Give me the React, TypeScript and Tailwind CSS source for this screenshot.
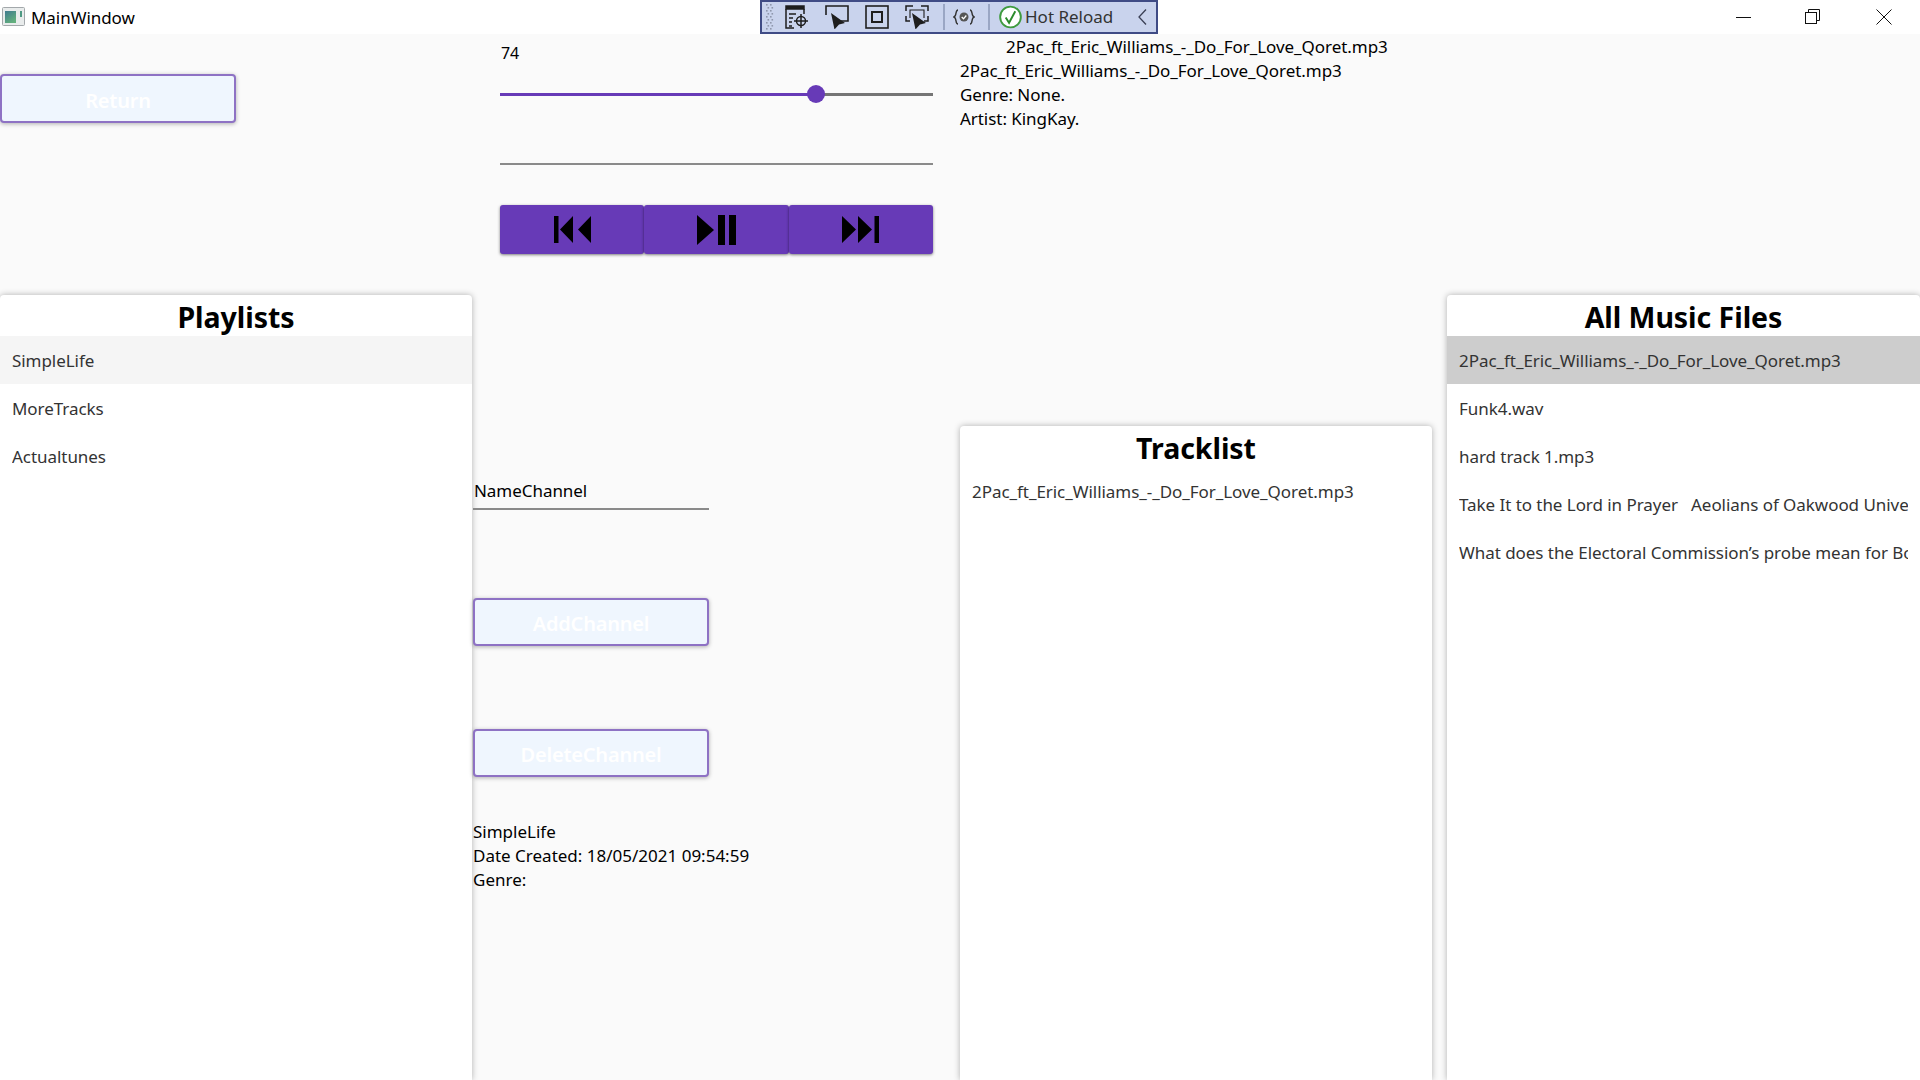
const font = "font-['Noto_Sans','Open_Sans',sans-serif]";

const playlists = ["SimpleLife", "MoreTracks", "Actualtunes"];
const musicFiles = [
  "2Pac_ft_Eric_Williams_-_Do_For_Love_Qoret.mp3",
  "Funk4.wav",
  "hard track 1.mp3",
  "Take It to the Lord in Prayer   Aeolians of Oakwood University",
  "What does the Electoral Commission’s probe mean for Boris Johnson",
];

const GhostButton = ({ label, className }: { label: string; className: string }) => (
  <button className={`flex items-center justify-center rounded-[4px] border-2 border-[#8e72c4] bg-[#eff6fe] text-[20px] font-semibold tracking-[-0.2px] text-white shadow-[0_1px_4px_rgba(0,0,0,0.3)] ${className}`}>
    <span className="translate-y-[2px]">{label}</span>
  </button>
);

const ListRow = ({ label, tone }: { label: string; tone?: string }) => (
  <div className={`flex h-12 items-center overflow-hidden whitespace-pre px-3 pt-[1px] text-[#333333] ${tone ?? ""}`}>
    <span className="block w-full overflow-hidden">{label}</span>
  </div>
);

const Card = ({ title, className, children }: { title: string; className: string; children: React.ReactNode }) => (
  <div className={`flex flex-col rounded-t-[4px] bg-white shadow-[0_0_6px_rgba(0,0,0,0.3)] ${className}`}>
    <h2 className="h-[41px] text-center text-[28.5px] font-bold leading-[44px] text-black">{title}</h2>
    {children}
  </div>
);

const Toolbar = () => (
  <div className="absolute left-[760px] top-0 flex h-[34px] w-[398px] items-center border-2 border-[#3f4b85] bg-[#c9d3ed]">
    <svg width="9" height="26" viewBox="0 0 9 26" className="ml-[4px]" fill="#8f97ad">
      {[0, 1, 2, 3, 4, 5, 6, 7, 8].map((i) => (
        <g key={i}>
          <rect x={i % 2 ? 1.5 : 0} y={i * 3} width="1.6" height="1.6" />
          <rect x={i % 2 ? 5.5 : 4} y={i * 3} width="1.6" height="1.6" />
        </g>
      ))}
    </svg>
    <svg width="24" height="24" viewBox="0 0 24 24" className="ml-[10px]" fill="none" stroke="#1e1e1e" strokeWidth="1.5">
      <path d="M1 1h18v3H1z" fill="#1e1e1e" />
      <path d="M1 4v19h8M19 4v5" />
      <path d="M4 9h7M4 13h4M4 17h3M4 21h3" />
      <circle cx="16" cy="16" r="4.5" />
      <path d="M16 9v14M9 16h14" />
    </svg>
    <svg width="24" height="24" viewBox="0 0 24 24" className="ml-[16px]" fill="none" stroke="#1e1e1e" strokeWidth="1.6">
      <path d="M1 10V1h22v15h-7" />
      <path d="M6 8l14 10-6 1.500-4.500 5z" fill="#1e1e1e" stroke="none" />
    </svg>
    <svg width="24" height="24" viewBox="0 0 24 24" className="ml-[16px]" fill="none" stroke="#1e1e1e" strokeWidth="1.6">
      <rect x="1" y="1" width="22" height="22" />
      <rect x="7" y="7" width="10" height="10" strokeWidth="2" />
    </svg>
    <svg width="24" height="24" viewBox="0 0 24 24" className="ml-[16px]" fill="none" stroke="#1e1e1e" strokeWidth="1.5">
      <path d="M1 6V1h7M16 1h7v5M1 11v5h4M23 11v5h-4" />
      <path d="M5 13V5h14v8" strokeWidth="1.1" />
      <path d="M7 8l14 10-6 1.500-4.500 5z" fill="#1e1e1e" stroke="none" />
    </svg>
    <div className="ml-[14px] h-[26px] w-[2px] bg-[#9aa6c4]" />
    <svg width="22" height="16" viewBox="0 0 22 16" className="ml-[8px]" fill="none" stroke="#333333" strokeWidth="1.4">
      <path d="M5 1C2 1 4 7 1 8c3 1 1 7 4 7M17 1c3 0 1 6 4 7-3 1-1 7-4 7" />
      <circle cx="11" cy="8" r="4.500" fill="#555555" stroke="none" />
      <path d="M8.700 8l1.800 1.800 2.800-3.300" stroke="#ffffff" strokeWidth="1.300" />
    </svg>
    <div className="ml-[13px] h-[26px] w-[2px] bg-[#9aa6c4]" />
    <svg width="23" height="24" viewBox="0 0 24 24" className="ml-[9px]" fill="none">
      <circle cx="12" cy="12" r="10.800" fill="#ffffff" stroke="#3f9b3f" strokeWidth="2" />
      <path d="M7 12.500l3.500 5.500L17 6" stroke="#2b8a2b" strokeWidth="2" />
    </svg>
    <span className="ml-[3px] translate-y-[-1px] text-[17px] leading-none tracking-normal text-[#333333]">Hot Reload</span>
    <svg width="9" height="16" viewBox="0 0 9 16" className="ml-auto mr-[9px]" fill="none" stroke="#3a3f55" strokeWidth="1.300">
      <path d="M8 0.500L1 8l7 7.500" />
    </svg>
  </div>
);

const TitleBar = () => (
  <div className="relative flex h-[34px] items-center bg-white">
    <svg width="24" height="20" viewBox="0 0 24 20" className="ml-[2px]">
      <defs>
        <linearGradient id="pane" x1="0" y1="0" x2="0.6" y2="1">
          <stop offset="0" stopColor="#3f7a8f" />
          <stop offset="1" stopColor="#63b07d" />
        </linearGradient>
      </defs>
      <rect x="0.500" y="0.500" width="22" height="18" rx="1" fill="#e9ecec" stroke="#a3a8ab" />
      <rect x="3" y="4" width="11" height="12" fill="url(#pane)" />
      <rect x="18" y="4" width="2" height="6" fill="#4f9a83" />
    </svg>
    <span className="ml-[5px] translate-y-[1px] text-black">MainWindow</span>
    <Toolbar />
    <div className="ml-auto flex items-center">
      <svg width="16" height="16" viewBox="0 0 16 16" className="mr-[53px]" stroke="#111111" fill="none">
        <path d="M0 8.500h15" />
      </svg>
      <svg width="16" height="16" viewBox="0 0 16 16" className="mr-[55px]" stroke="#111111" fill="none">
        <rect x="0.500" y="3.500" width="11" height="11" />
        <path d="M3.500 3.500V0.500h11v11h-3" />
      </svg>
      <svg width="16" height="16" viewBox="0 0 16 16" className="mr-[28px]" stroke="#111111" fill="none">
        <path d="M0.500 0.500l15 15M15.500 0.500l-15 15" />
      </svg>
    </div>
  </div>
);

const TransportButton = ({ children }: { children: React.ReactNode }) => (
  <button className="flex h-[49px] flex-1 items-center justify-center rounded-[3px] bg-[#673ab7] shadow-[0_1px_3px_rgba(0,0,0,0.5)]">
    {children}
  </button>
);

const Player = () => (
  <div className="ml-[28px] w-[433px]">
    <div className="mt-[7px] pl-[1px] text-[16px] leading-6 text-black">74</div>
    <div className="relative mt-[28px] h-[3px] bg-[#757575]">
      <div className="h-full w-[316px] bg-[#673ab7]" />
      <div className="absolute left-[307px] top-[-8px] h-[18px] w-[18px] rounded-full bg-[#673ab7]" />
    </div>
    <div className="mt-[67px] h-[2px] bg-[#8a8a8a]" />
    <div className="mt-[40px] flex">
      <TransportButton>
        <svg width="37" height="27" viewBox="0 0 37 27" fill="#000000">
          <rect x="0" y="0" width="4.500" height="27" />
          <path d="M19 0v27L6 13.500zM37 0v27L24 13.500z" />
        </svg>
      </TransportButton>
      <TransportButton>
        <svg width="39" height="30" viewBox="0 0 39 30" fill="#000000">
          <path d="M0 0l17 15L0 30z" />
          <rect x="21" y="0" width="7" height="30" />
          <rect x="32" y="0" width="7" height="30" />
        </svg>
      </TransportButton>
      <TransportButton>
        <svg width="37" height="27" viewBox="0 0 37 27" fill="#000000">
          <path d="M0 0v27l14-13.500zM16 0v27l14-13.500z" />
          <rect x="32.500" y="0" width="4.500" height="27" />
        </svg>
      </TransportButton>
    </div>
  </div>
);

export default function App() {
  return (
    <div className={`${font} flex h-[1080px] w-[1920px] flex-col overflow-hidden bg-[#fafafa] text-[17px] tracking-[-0.05px] text-black`}>
      <TitleBar />
      <div className="flex flex-1">
        <div className="flex w-[472px] flex-col">
          <GhostButton label="Return" className="mt-[40px] h-[49px] w-[236px]" />
          <Card title="Playlists" className="mt-[172px] flex-1">
            <ListRow label={playlists[0]} tone="bg-[#f5f5f5]" />
            <ListRow label={playlists[1]} />
            <ListRow label={playlists[2]} />
          </Card>
        </div>

        <div className="flex w-[488px] flex-col">
          <Player />
          <div className="ml-[1px] mt-[224px] h-[32px] w-[236px] border-b-2 border-[#8a8a8a] pl-[1px] leading-[26px]">NameChannel</div>
          <GhostButton label="AddChannel" className="ml-[1px] mt-[88px] h-[48px] w-[236px]" />
          <GhostButton label="DeleteChannel" className="ml-[1px] mt-[83px] h-[48px] w-[236px]" />
          <div className="ml-[1px] mt-[43px] leading-6 tracking-normal">
            <div>SimpleLife</div>
            <div>Date Created: 18/05/2021 09:54:59</div>
            <div>Genre:</div>
          </div>
        </div>

        <div className="flex w-[472px] flex-col">
          <div className="h-[392px] pt-[1px] leading-6">
            <div className="pl-[46px]">2Pac_ft_Eric_Williams_-_Do_For_Love_Qoret.mp3</div>
            <div>2Pac_ft_Eric_Williams_-_Do_For_Love_Qoret.mp3</div>
            <div>Genre: None.</div>
            <div>Artist: KingKay.</div>
          </div>
          <Card title="Tracklist" className="flex-1">
            <ListRow label="2Pac_ft_Eric_Williams_-_Do_For_Love_Qoret.mp3" />
          </Card>
        </div>

        <div className="ml-[15px] flex w-[473px] flex-col">
          <Card title="All Music Files" className="mt-[261px] flex-1">
            <ListRow label={musicFiles[0]} tone="bg-[#cdcdcd]" />
            {musicFiles.slice(1).map((f) => (
              <ListRow key={f} label={f} />
            ))}
          </Card>
        </div>
      </div>
    </div>
  );
}
